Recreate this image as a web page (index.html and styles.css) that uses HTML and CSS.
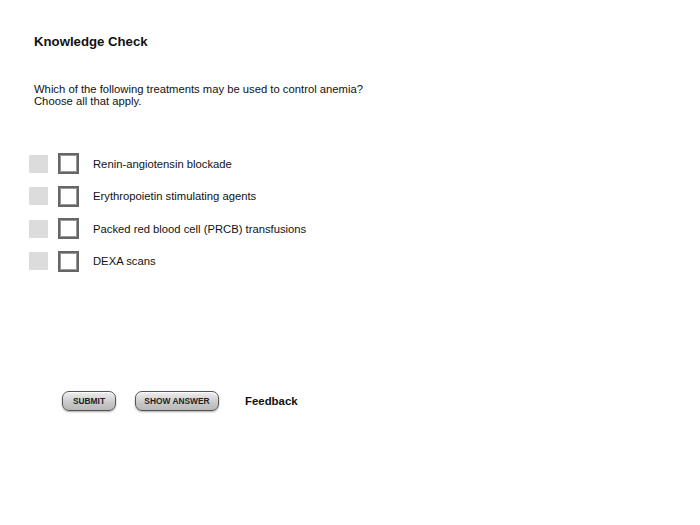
FILE: index.html
```html
<!DOCTYPE html>
<html lang="en">
<head>
    <meta charset="UTF-8">
    <title>Knowledge Check</title>
    <link rel="stylesheet" href="styles.css">
</head>
<body>
    <div class="quiz">
        <h1 class="quiz-title">Knowledge Check</h1>
        <p class="question">Which of the following treatments may be used to control anemia?<br>Choose all that apply.</p>

        <ul class="options">
            <li class="option">
                <span class="marker"></span>
                <span class="box"></span>
                <span class="label">Renin-angiotensin blockade</span>
            </li>
            <li class="option">
                <span class="marker"></span>
                <span class="box"></span>
                <span class="label">Erythropoietin stimulating agents</span>
            </li>
            <li class="option">
                <span class="marker"></span>
                <span class="box"></span>
                <span class="label">Packed red blood cell (PRCB) transfusions</span>
            </li>
            <li class="option">
                <span class="marker"></span>
                <span class="box"></span>
                <span class="label">DEXA scans</span>
            </li>
        </ul>

        <div class="actions">
            <button class="btn btn-submit">Submit</button>
            <button class="btn btn-answer">Show Answer</button>
            <span class="feedback">Feedback</span>
        </div>
    </div>
</body>
</html>
```

FILE: styles.css
```css
body {
    margin: 0;
    padding: 0;
    background-color: #fff;
    font-family: "Liberation Sans", Arial, sans-serif;
    color: #111;
}
.quiz {
    width: 700px;
    height: 525px;
}
.quiz-title {
    margin: 0;
    padding: 34px 0 0 34px;
    font-size: 13.2px;
    line-height: 15px;
    font-weight: bold;
}
.question {
    margin: 0;
    padding: 34px 0 0 34px;
    font-size: 11.25px;
    line-height: 12px;
}
.options {
    list-style: none;
    margin: 0;
    padding: 46px 0 0 29px;
}
.option {
    display: flex;
    align-items: center;
    height: 21px;
    margin-bottom: 11.5px;
}
.marker {
    width: 19px;
    height: 18px;
    background-color: #dcdcdc;
}
.box {
    width: 17px;
    height: 17px;
    margin-left: 10px;
    border: 2px solid #666;
    box-shadow: inset 0 0 0 1px #999;
    background-color: #fff;
}
.label {
    margin-left: 14px;
    font-size: 11.25px;
}
.actions {
    display: flex;
    align-items: center;
    padding: 108px 0 0 62px;
}
.btn {
    height: 20px;
    padding: 0;
    border: 1px solid #555;
    border-radius: 7px;
    background: linear-gradient(#eeeeee, #c8c8c8 60%, #b8b8b8);
    box-shadow: 0 1px 2px rgba(0, 0, 0, 0.35), inset 0 1px 0 #fff;
    font-family: "Liberation Sans", Arial, sans-serif;
    font-size: 8.4px;
    font-weight: bold;
    text-transform: uppercase;
    color: #222;
    cursor: pointer;
}
.btn-submit {
    width: 54px;
}
.btn-answer {
    width: 84px;
    margin-left: 19px;
}
.feedback {
    margin-left: 26px;
    font-size: 11.4px;
    font-weight: bold;
}
```
